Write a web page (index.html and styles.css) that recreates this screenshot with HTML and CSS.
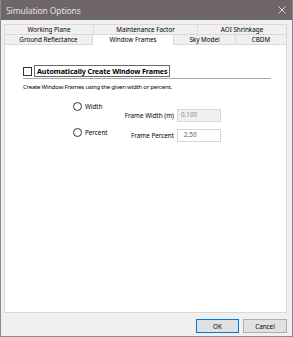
FILE: index.html
```html
<!DOCTYPE html>
<html>
<head>
<meta charset="utf-8">
<link rel="stylesheet" href="styles.css">
</head>
<body>
<div class="window">
  <div class="titlebar">
    <span class="title">Simulation Options</span>
    <svg class="close" width="8" height="8" viewBox="0 0 8 8"><path d="M0.5 0.5 L7.5 7.5 M7.5 0.5 L0.5 7.5" stroke="#e6e6e6" stroke-width="0.9" fill="none"/></svg>
  </div>
  <div class="client">
    <div class="tabs">
      <div class="tabrow row1">
        <div class="tab">Working Plane</div>
        <div class="tab">Maintenance Factor</div>
        <div class="tab">AOI Shrinkage</div>
      </div>
      <div class="tabrow row2">
        <div class="tab">Ground Reflectance</div>
        <div class="tab active">Window Frames</div>
        <div class="tab">Sky Model</div>
        <div class="tab">CBDM</div>
      </div>
    </div>
    <div class="panel">
      <div class="checkrow">
        <span class="checkbox"></span>
        <span class="checklabel">Automatically Create Window Frames</span>
      </div>
      <div class="separator"></div>
      <div class="desc">Create Window Frames using the given width or percent.</div>
      <div class="form">
        <div class="radios">
          <label class="radio"><span class="circle"></span>Width</label>
          <label class="radio"><span class="circle"></span>Percent</label>
        </div>
        <div class="fields">
          <div class="field"><span class="flabel">Frame Width (m)</span><span class="input disabled">0.100</span></div>
          <div class="field"><span class="flabel">Frame Percent</span><span class="input">2.50</span></div>
        </div>
      </div>
    </div>
    <div class="footer">
      <button class="btn default">OK</button>
      <button class="btn">Cancel</button>
    </div>
  </div>
</div>
</body>
</html>
```
FILE: styles.css
```css
html, body {
  margin: 0;
  padding: 0;
  background: #ffffff;
}
.window {
  width: 293px;
  height: 337px;
  box-sizing: border-box;
  border: 1px solid #8e8a8a;
  border-top: none;
  background: #f0f0f0;
  display: flex;
  flex-direction: column;
  font-family: "Noto Sans", "Open Sans", sans-serif;
  color: #000;
}
.titlebar {
  height: 20px;
  background: #6f6767;
  display: flex;
  align-items: center;
  justify-content: space-between;
  padding: 0 6px 0 5px;
  flex: none;
}
.title {
  color: #e4e0e0;
  font-size: 8.5px;
  letter-spacing: -0.1px;
}
.close {
  display: block;
}
.client {
  flex: 1;
  display: flex;
  flex-direction: column;
  padding: 4px 4px 0 3px;
}
.tabrow {
  display: grid;
  height: 10px;
}
.row1 {
  grid-template-columns: 90px 104px 89px;
}
.row2 {
  grid-template-columns: 89px 81px 62px 51px;
}
.tab {
  box-sizing: border-box;
  border: 1px solid #d9d9d9;
  border-left: none;
  border-bottom: none;
  background: #f0f0f0;
  font-size: 6.3px;
  line-height: 9px;
  text-align: center;
  white-space: nowrap;
}
.tab:first-child {
  border-left: 1px solid #d9d9d9;
}
.tab.active {
  background: #ffffff;
  border-color: #d9d9d9;
  position: relative;
  z-index: 1;
  height: 11px;
}
.panel {
  width: 283px;
  height: 269px;
  box-sizing: border-box;
  background: #ffffff;
  border: 1px solid #d9d9d9;
  padding: 20px 0 0 18px;
}
.checkrow {
  display: flex;
  align-items: center;
  height: 12px;
}
.checkbox {
  width: 7px;
  height: 7px;
  border: 1px solid #333;
  background: #fff;
  margin-right: 2px;
}
.checklabel {
  font-size: 7.2px;
  font-weight: bold;
  letter-spacing: -0.12px;
  border: 1px solid #6a6a6a;
  padding: 0 1px 0 2px;
  line-height: 10px;
}
.separator {
  width: 248px;
  height: 1px;
  background: #a8a8a8;
  margin-top: 1px;
}
.desc {
  font-size: 6px;
  letter-spacing: -0.2px;
  margin-top: 4px;
  line-height: 8px;
}
.form {
  display: flex;
  align-items: flex-start;
  margin-top: 10px;
}
.radios {
  display: flex;
  flex-direction: column;
  gap: 16px;
  margin-left: 50px;
  width: 50px;
}
.radio {
  display: flex;
  align-items: center;
  font-size: 6.3px;
  height: 10px;
}
.circle {
  width: 7px;
  height: 7px;
  border: 1px solid #333;
  border-radius: 50%;
  margin-right: 3px;
  background: #fff;
}
.fields {
  display: flex;
  flex-direction: column;
  gap: 7px;
  margin-top: 8px;
}
.field {
  display: flex;
  align-items: center;
  justify-content: flex-end;
  width: 98px;
}
.flabel {
  font-size: 6.3px;
  margin-right: 3px;
}
.input {
  width: 44px;
  height: 13px;
  box-sizing: border-box;
  border: 1px solid #d6d6d6;
  background: #fff;
  font-size: 6.3px;
  line-height: 10px;
  padding-left: 6px;
  color: #555;
}
.input.disabled {
  background: #f0f0f0;
  border-color: #d8d8d8;
  color: #8a8a8a;
  padding-left: 3px;
}
.footer {
  display: flex;
  justify-content: flex-end;
  gap: 4px;
  padding: 6px 1px 0 0;
}
.btn {
  width: 44px;
  height: 14px;
  box-sizing: border-box;
  border: 1px solid #adadad;
  background: #e1e1e1;
  font-family: "Noto Sans", "Open Sans", sans-serif;
  font-size: 6.3px;
  padding: 0;
  color: #000;
}
.btn.default {
  border: 1px solid #0078d7;
  width: 43px;
}
```
